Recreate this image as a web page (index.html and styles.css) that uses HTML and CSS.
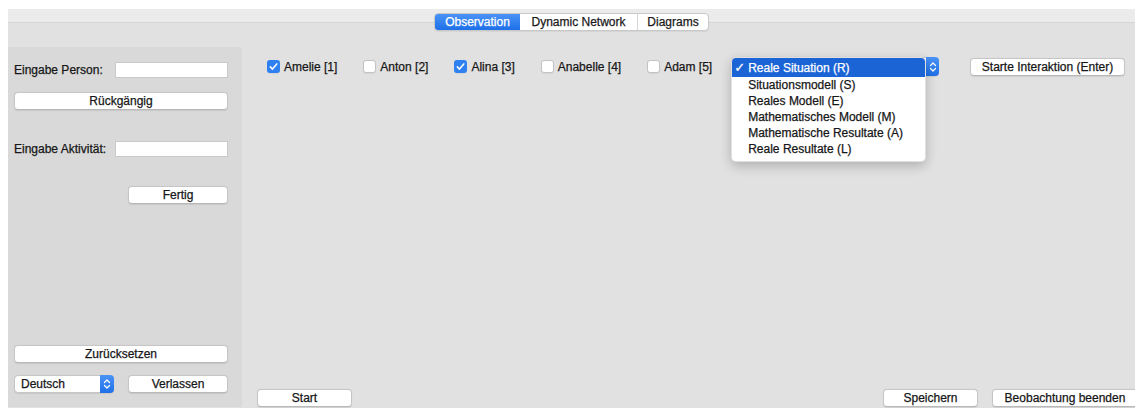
FILE: index.html
```html
<!DOCTYPE html>
<html lang="de">
<head>
<meta charset="utf-8">
<title>Observation</title>
<link rel="stylesheet" href="styles.css">
</head>
<body>
<div class="window">
  <div class="tabbar">
    <div class="tabs">
      <div class="tab tab-active tab-obs">Observation</div>
      <div class="tab tab-net">Dynamic Network</div>
      <div class="tab tab-diag">Diagrams</div>
    </div>
  </div>

  <div class="content">
    <aside class="panel">
      <div class="field-row">
        <label class="field-label">Eingabe Person:</label>
        <input class="text-input" type="text">
      </div>
      <button class="btn btn-full btn-undo">Rückgängig</button>

      <div class="field-row field-row-activity">
        <label class="field-label">Eingabe Aktivität:</label>
        <input class="text-input" type="text">
      </div>
      <button class="btn btn-small btn-done">Fertig</button>

      <button class="btn btn-full btn-reset">Zurücksetzen</button>
      <div class="panel-footer">
        <div class="select select-lang">
          <span class="select-value">Deutsch</span>
          <span class="stepper">
            <svg width="8" height="12" viewBox="0 0 8 12"><path d="M1.5 4.5 L4 2 L6.5 4.5 M1.5 7.5 L4 10 L6.5 7.5" fill="none" stroke="#fff" stroke-width="1.3" stroke-linecap="round" stroke-linejoin="round"/></svg>
          </span>
        </div>
        <button class="btn btn-small">Verlassen</button>
      </div>
    </aside>

    <main class="stage">
      <div class="toolbar">
        <label class="check"><span class="box box-on"><svg width="13" height="13" viewBox="0 0 13 13"><path d="M3.3 6.9 L5.5 9.1 L9.8 3.9" fill="none" stroke="#fff" stroke-width="1.5" stroke-linecap="round" stroke-linejoin="round"/></svg></span>Amelie [1]</label>
        <label class="check"><span class="box"></span>Anton [2]</label>
        <label class="check"><span class="box box-on"><svg width="13" height="13" viewBox="0 0 13 13"><path d="M3.3 6.9 L5.5 9.1 L9.8 3.9" fill="none" stroke="#fff" stroke-width="1.5" stroke-linecap="round" stroke-linejoin="round"/></svg></span>Alina [3]</label>
        <label class="check"><span class="box"></span>Anabelle [4]</label>
        <label class="check"><span class="box"></span>Adam [5]</label>

        <!-- phase popup, shown open: the menu covers the closed button face -->
        <div class="select select-phase">
          <span class="select-value"></span>
          <span class="stepper stepper-tall">
            <svg width="8" height="12" viewBox="0 0 8 12"><path d="M1.5 4.5 L4 2 L6.5 4.5 M1.5 7.5 L4 10 L6.5 7.5" fill="none" stroke="#fff" stroke-width="1.3" stroke-linecap="round" stroke-linejoin="round"/></svg>
          </span>
          <ul class="menu">
            <li class="menu-item menu-item-selected"><span class="menu-check">✓</span>Reale Situation (R)</li>
            <li class="menu-item">Situationsmodell (S)</li>
            <li class="menu-item">Reales Modell (E)</li>
            <li class="menu-item">Mathematisches Modell (M)</li>
            <li class="menu-item">Mathematische Resultate (A)</li>
            <li class="menu-item">Reale Resultate (L)</li>
          </ul>
        </div>

        <button class="btn btn-start-interaction">Starte Interaktion (Enter)</button>
      </div>

      <div class="actions">
        <button class="btn btn-start">Start</button>
        <div class="actions-right">
          <button class="btn btn-save">Speichern</button>
          <button class="btn btn-end">Beobachtung beenden</button>
        </div>
      </div>
    </main>
  </div>
</div>
</body>
</html>
```

FILE: styles.css
```css
* {
  box-sizing: border-box;
}

html, body {
  margin: 0;
  height: 100%;
  background: #ffffff;
  overflow: hidden;
}

body {
  font-family: "Liberation Sans", Arial, sans-serif;
  font-size: 12px;
  color: #161616;
  -webkit-text-stroke: 0.25px currentColor;
}

/* ---------- window ---------- */
.window {
  margin: 9px 0 0 8px;
  height: 399px;
  background: #e1e1e1;
  display: flex;
  flex-direction: column;
}

.tabbar {
  height: 14px;
  flex: none;
  background: #ebebeb;
  border-bottom: 1px solid #d5d5d5;
  display: flex;
  justify-content: center;
  align-items: flex-start;
  position: relative;
  z-index: 2;
}

.tabs {
  margin-top: 4px;
  height: 18px;
  display: flex;
  background: #ffffff;
  border: 1px solid #c8c8c8;
  border-radius: 4px;
  box-shadow: 0 1px 1px rgba(0, 0, 0, 0.06);
  overflow: hidden;
}

.tab {
  display: flex;
  align-items: center;
  justify-content: center;
  color: #1a1a1a;
  border-left: 1px solid #d6d6d6;
}

.tab-obs { width: 85px; border-left: 0; }
.tab-net { width: 117px; border-left: 0; }
.tab-diag { width: 71px; }

.tab-active {
  background: linear-gradient(#4a93f6, #1e70e9);
  color: #ffffff;
}

/* ---------- content ---------- */
.content {
  flex: 1;
  display: grid;
  grid-template-columns: 234px 1fr;
  padding-top: 24px;
  min-height: 0;
}

/* ---------- left panel ---------- */
.panel {
  background: #d9d9d9;
  border-radius: 0 4px 0 0;
  margin-bottom: 1px;
  padding: 15px 14px 14px 6px;
  display: flex;
  flex-direction: column;
}

.field-row {
  display: flex;
  justify-content: space-between;
  align-items: center;
  height: 16px;
}

.field-row-activity {
  margin-top: 31px;
}

.text-input {
  width: 113px;
  height: 16px;
  border: 1px solid #c9c9c9;
  background: #ffffff;
  padding: 0 3px;
  font: inherit;
  outline: none;
}

.btn {
  height: 18px;
  padding: 0;
  font: inherit;
  color: #161616;
  background: #ffffff;
  border: 1px solid #c6c6c6;
  border-bottom-color: #b8b8b8;
  border-radius: 4px;
  box-shadow: 0 0.5px 1px rgba(0, 0, 0, 0.08);
  display: flex;
  align-items: center;
  justify-content: center;
  flex: none;
}

.btn-full {
  width: 100%;
}

.btn-small {
  width: 100px;
}

.btn-undo {
  margin-top: 14px;
}

.btn-done {
  margin-top: 29px;
  align-self: flex-end;
}

.btn-reset {
  margin-top: auto;
}

.panel-footer {
  margin-top: 12px;
  display: flex;
  justify-content: space-between;
  align-items: center;
}

/* ---------- popup selects ---------- */
.select {
  position: relative;
  display: flex;
  align-items: center;
  height: 18px;
  background: #ffffff;
  border: 1px solid #c6c6c6;
  border-radius: 4px;
  box-shadow: 0 0.5px 1px rgba(0, 0, 0, 0.08);
}

.select-value {
  flex: 1;
  padding-left: 6px;
}

.stepper {
  width: 14px;
  align-self: stretch;
  margin: -1px -1px -1px 0;
  background: linear-gradient(#4a93f6, #1e70e9);
  border-radius: 0 4px 4px 0;
  display: flex;
  align-items: center;
  justify-content: center;
}

.stepper svg {
  -webkit-text-stroke: 0;
}

.select-lang {
  width: 100px;
}

.select-phase {
  width: 208px;
  height: 19px;
  margin-left: 19px;
}

.stepper-tall {
  width: 13px;
}

.menu {
  position: absolute;
  top: -1px;
  left: -1px;
  width: 195px;
  margin: 0;
  padding: 0 0 4px;
  list-style: none;
  background: #ffffff;
  border: 1px solid rgba(0, 0, 0, 0.12);
  border-radius: 5px;
  box-shadow: 0 4px 12px rgba(0, 0, 0, 0.22);
  overflow: hidden;
  z-index: 3;
}

.menu-item {
  height: 16px;
  line-height: 16px;
  padding-left: 16px;
  color: #161616;
  white-space: nowrap;
}

.menu-item-selected {
  height: 19px;
  line-height: 19px;
  padding-left: 2px;
  background: #1a64d6;
  color: #ffffff;
}

.menu-check {
  display: inline-block;
  width: 14px;
  font-family: "DejaVu Sans", sans-serif;
  font-size: 13px;
  font-weight: bold;
}

/* ---------- stage ---------- */
.stage {
  display: flex;
  flex-direction: column;
  min-width: 0;
}

.toolbar {
  display: flex;
  align-items: center;
  padding: 10px 10px 0 25px;
}

.check {
  display: flex;
  align-items: center;
  gap: 4px;
  margin-right: 26px;
  white-space: nowrap;
}

.check:nth-of-type(5) {
  margin-right: 0;
}

.box {
  width: 13px;
  height: 13px;
  background: #ffffff;
  border: 1px solid #c3c3c3;
  border-radius: 3px;
  box-shadow: 0 0.5px 1px rgba(0, 0, 0, 0.06);
  display: flex;
  -webkit-text-stroke: 0;
}

.box-on {
  border: 0;
  background: #2f80f1;
}

.btn-start-interaction {
  width: 155px;
  margin-left: auto;
}

.actions {
  margin-top: auto;
  padding: 0 0 1px 15px;
  display: flex;
  align-items: center;
}

.btn-start {
  width: 95px;
}

.actions-right {
  margin-left: auto;
  display: flex;
  gap: 14px;
  margin-right: -3px;
}

.btn-save {
  width: 95px;
}

.btn-end {
  width: 146px;
}
```
